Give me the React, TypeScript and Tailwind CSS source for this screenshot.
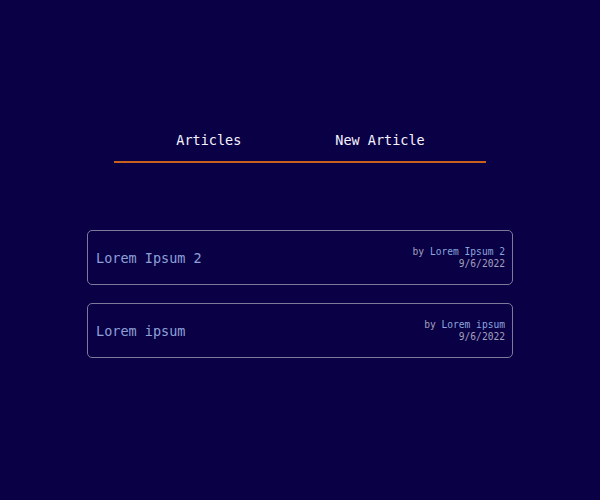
const articles = [
  { title: "Lorem Ipsum 2", author: "Lorem Ipsum 2", date: "9/6/2022" },
  { title: "Lorem ipsum", author: "Lorem ipsum", date: "9/6/2022" },
];

const App = () => {
  return (
    <div
      className="min-h-[500px] w-full bg-[#0a0046] pt-[131px]"
      style={{ fontFamily: '"DejaVu Sans Mono", "Liberation Mono", monospace' }}
    >
      <nav className="mx-auto w-[372px]">
        <div className="flex justify-center gap-[94px] pb-[12px] text-[13.5px] leading-[18px] text-[#f4f4ff]">
          <a href="#" className="pl-[1px]">
            Articles
          </a>
          <a href="#">New Article</a>
        </div>
        <div className="h-[2px] bg-[#c8601e]" />
      </nav>
      <div className="mx-auto mt-[67px] flex w-[426px] flex-col gap-[18px]">
        {articles.map((article, i) => (
          <div
            key={i}
            className="flex h-[55px] items-center justify-between rounded-[5px] border border-[#7c7a9a] pl-[8px] pr-[7px]"
          >
            <span className="pt-[1px] text-[13.5px] text-[#8da0d8]">{article.title}</span>
            <div className="flex flex-col items-end pt-[1px] text-[9.6px] leading-[12px]">
              <span className="text-[#a2a2bc]">
                by <span className="text-[#8aa6dc]">{article.author}</span>
              </span>
              <span className="text-[#a2a2bc]">{article.date}</span>
            </div>
          </div>
        ))}
      </div>
    </div>
  );
};

export default App;
